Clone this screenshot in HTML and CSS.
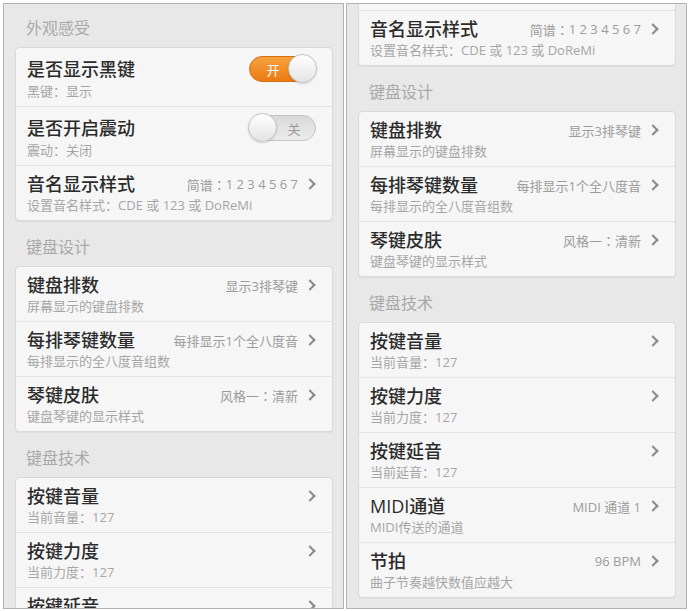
FILE: index.html
```html
<!DOCTYPE html>
<html lang="zh-CN">
<head>
    <meta charset="UTF-8">
    <meta name="viewport" content="width=device-width, initial-scale=1.0">
    <title>钢琴设置</title>
    <link rel="stylesheet" href="styles.css">
</head>
<body>

    <div class="screens">

        <!-- screen 1: top of the settings list -->
        <div class="screen">
            <div class="list">
                <h3 class="group-title first">外观感受</h3>
                <div class="card">
                    <div class="row tall">
                        <div class="row-main">
                            <span class="title">是否显示黑键</span>
                            <span class="switch on"><span class="switch-label">开</span><span class="knob"></span></span>
                        </div>
                        <div class="sub">黑键<span class="colon">：</span>显示</div>
                    </div>
                    <div class="row tall">
                        <div class="row-main">
                            <span class="title">是否开启震动</span>
                            <span class="switch off"><span class="knob"></span><span class="switch-label">关</span></span>
                        </div>
                        <div class="sub">震动<span class="colon">：</span>关闭</div>
                    </div>
                    <div class="row">
                        <div class="row-main">
                            <span class="title">音名显示样式</span>
                            <span class="value">简谱<span class="colon">：</span>1 2 3 4 5 6 7<i class="chevron"></i></span>
                        </div>
                        <div class="sub">设置音名样式<span class="colon">：</span>CDE 或 123 或 DoReMi</div>
                    </div>
                </div>

                <h3 class="group-title">键盘设计</h3>
                <div class="card">
                    <div class="row">
                        <div class="row-main">
                            <span class="title">键盘排数</span>
                            <span class="value">显示3排琴键<i class="chevron"></i></span>
                        </div>
                        <div class="sub">屏幕显示的键盘排数</div>
                    </div>
                    <div class="row">
                        <div class="row-main">
                            <span class="title">每排琴键数量</span>
                            <span class="value">每排显示1个全八度音<i class="chevron"></i></span>
                        </div>
                        <div class="sub">每排显示的全八度音组数</div>
                    </div>
                    <div class="row">
                        <div class="row-main">
                            <span class="title">琴键皮肤</span>
                            <span class="value">风格一<span class="colon">：</span>清新<i class="chevron"></i></span>
                        </div>
                        <div class="sub">键盘琴键的显示样式</div>
                    </div>
                </div>

                <h3 class="group-title">键盘技术</h3>
                <div class="card">
                    <div class="row">
                        <div class="row-main">
                            <span class="title">按键音量</span>
                            <span class="value"><i class="chevron"></i></span>
                        </div>
                        <div class="sub">当前音量<span class="colon">：</span>127</div>
                    </div>
                    <div class="row">
                        <div class="row-main">
                            <span class="title">按键力度</span>
                            <span class="value"><i class="chevron"></i></span>
                        </div>
                        <div class="sub">当前力度<span class="colon">：</span>127</div>
                    </div>
                    <div class="row">
                        <div class="row-main">
                            <span class="title">按键延音</span>
                            <span class="value"><i class="chevron"></i></span>
                        </div>
                        <div class="sub">当前延音<span class="colon">：</span>127</div>
                    </div>
                </div>
            </div>
        </div>

        <!-- screen 2: same list, scrolled down -->
        <div class="screen scrolled">
            <div class="list">
                <h3 class="group-title first">外观感受</h3>
                <div class="card">
                    <div class="row tall">
                        <div class="row-main">
                            <span class="title">是否显示黑键</span>
                            <span class="switch on"><span class="switch-label">开</span><span class="knob"></span></span>
                        </div>
                        <div class="sub">黑键<span class="colon">：</span>显示</div>
                    </div>
                    <div class="row tall">
                        <div class="row-main">
                            <span class="title">是否开启震动</span>
                            <span class="switch off"><span class="knob"></span><span class="switch-label">关</span></span>
                        </div>
                        <div class="sub">震动<span class="colon">：</span>关闭</div>
                    </div>
                    <div class="row">
                        <div class="row-main">
                            <span class="title">音名显示样式</span>
                            <span class="value">简谱<span class="colon">：</span>1 2 3 4 5 6 7<i class="chevron"></i></span>
                        </div>
                        <div class="sub">设置音名样式<span class="colon">：</span>CDE 或 123 或 DoReMi</div>
                    </div>
                </div>

                <h3 class="group-title">键盘设计</h3>
                <div class="card">
                    <div class="row">
                        <div class="row-main">
                            <span class="title">键盘排数</span>
                            <span class="value">显示3排琴键<i class="chevron"></i></span>
                        </div>
                        <div class="sub">屏幕显示的键盘排数</div>
                    </div>
                    <div class="row">
                        <div class="row-main">
                            <span class="title">每排琴键数量</span>
                            <span class="value">每排显示1个全八度音<i class="chevron"></i></span>
                        </div>
                        <div class="sub">每排显示的全八度音组数</div>
                    </div>
                    <div class="row">
                        <div class="row-main">
                            <span class="title">琴键皮肤</span>
                            <span class="value">风格一<span class="colon">：</span>清新<i class="chevron"></i></span>
                        </div>
                        <div class="sub">键盘琴键的显示样式</div>
                    </div>
                </div>

                <h3 class="group-title">键盘技术</h3>
                <div class="card">
                    <div class="row">
                        <div class="row-main">
                            <span class="title">按键音量</span>
                            <span class="value"><i class="chevron"></i></span>
                        </div>
                        <div class="sub">当前音量<span class="colon">：</span>127</div>
                    </div>
                    <div class="row">
                        <div class="row-main">
                            <span class="title">按键力度</span>
                            <span class="value"><i class="chevron"></i></span>
                        </div>
                        <div class="sub">当前力度<span class="colon">：</span>127</div>
                    </div>
                    <div class="row">
                        <div class="row-main">
                            <span class="title">按键延音</span>
                            <span class="value"><i class="chevron"></i></span>
                        </div>
                        <div class="sub">当前延音<span class="colon">：</span>127</div>
                    </div>
                    <div class="row">
                        <div class="row-main">
                            <span class="title">MIDI通道</span>
                            <span class="value">MIDI 通道 1<i class="chevron"></i></span>
                        </div>
                        <div class="sub">MIDI传送的通道</div>
                    </div>
                    <div class="row">
                        <div class="row-main">
                            <span class="title">节拍</span>
                            <span class="value">96 BPM<i class="chevron"></i></span>
                        </div>
                        <div class="sub">曲子节奏越快数值应越大</div>
                    </div>
                </div>
            </div>
        </div>

    </div>

</body>
</html>
```

FILE: styles.css
```css
body {
    margin: 0;
    background-color: #fff;
    font-family: "Open Sans", "Noto Sans CJK SC", sans-serif;
}
.screens {
    display: flex;
    gap: 2px;
    padding: 3px 0 0 3px;
}
.screen {
    width: 339px;
    height: 604px;
    border: 1px solid #b2b2b2;
    background-color: #e8e8e8;
    overflow: hidden;
}
.list {
    padding: 0 10px 0 11px;
}
.scrolled .list {
    margin-top: -155px; /* scrolled position */
}
.group-title {
    margin: 0;
    padding: 16px 0 9px 11px;
    font-size: 16px;
    line-height: 20px;
    font-weight: normal;
    color: #a9a9a9;
}
.group-title.first {
    padding-top: 14px;
}
.card {
    background-color: #f6f6f6;
    border: 1px solid #d9d9d9;
    border-radius: 4px;
    box-shadow: 0 1px 0 rgba(0, 0, 0, 0.04);
}
.row {
    padding: 7px 16px 7px 11px;
}
.row + .row {
    border-top: 1px solid #e3e3e3;
}
.row.tall {
    padding-top: 10px;
}
.row-main {
    display: flex;
    align-items: center;
    justify-content: space-between;
    height: 22px;
}
.title {
    font-size: 18px;
    line-height: 22px;
    font-weight: 500;
    color: #2b2b2b;
}
.sub {
    margin-top: 2px;
    font-size: 13px;
    line-height: 16px;
    color: #a6a6a6;
}
.row.tall .sub {
    margin-top: 3px;
}
.colon {
    font-family: "Noto Sans CJK TC", sans-serif; /* centred full-width colon */
}
.value {
    display: flex;
    align-items: center;
    font-size: 13px;
    color: #9c9c9c;
}
.chevron {
    width: 6px;
    height: 6px;
    margin: 0 2px 0 8px;
    border-top: 2px solid #8a8a8a;
    border-right: 2px solid #8a8a8a;
    transform: rotate(45deg);
}

/* toggle switch */
.switch {
    position: relative;
    display: flex;
    align-items: center;
    width: 67px;
    height: 26px;
    margin: -3px 0;
    border-radius: 13px;
    font-size: 13px;
    box-sizing: border-box;
}
.switch.on {
    justify-content: flex-start;
    background: linear-gradient(#f6a23f, #ea7a12);
    border: 1px solid #d9700f;
    color: #fff;
}
.switch.on .switch-label {
    width: 46px;
    text-align: center;
}
.switch.off {
    justify-content: flex-end;
    background: linear-gradient(#d9d9d9, #ececec);
    border: 1px solid #c4c4c4;
    color: #9a9a9a;
}
.switch.off .switch-label {
    width: 42px;
    text-align: center;
}
.knob {
    position: absolute;
    top: -3px;
    width: 29px;
    height: 29px;
    border-radius: 50%;
    background: linear-gradient(#ffffff, #e4e4e4);
    border: 1px solid #c2c2c2;
    box-sizing: border-box;
    box-shadow: 0 1px 2px rgba(0, 0, 0, 0.15);
}
.switch.on .knob {
    right: -2px;
}
.switch.off .knob {
    left: -2px;
}
```
